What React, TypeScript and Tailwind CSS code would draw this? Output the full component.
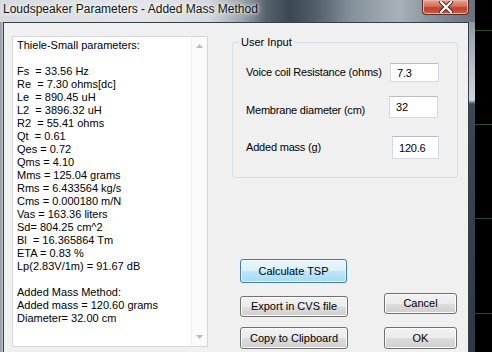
import React from 'react'

const results = [
    'Thiele-Small parameters:',
    '',
    'Fs  = 33.56 Hz',
    'Re  = 7.30 ohms[dc]',
    'Le  = 890.45 uH',
    'L2  = 3896.32 uH',
    'R2  = 55.41 ohms',
    'Qt  = 0.61',
    'Qes = 0.72',
    'Qms = 4.10',
    'Mms = 125.04 grams',
    'Rms = 6.433564 kg/s',
    'Cms = 0.000180 m/N',
    'Vas = 163.36 liters',
    'Sd= 804.25 cm^2',
    'Bl  = 16.365864 Tm',
    'ETA = 0.83 %',
    'Lp(2.83V/1m) = 91.67 dB',
    '',
    'Added Mass Method:',
    'Added mass = 120.60 grams',
    'Diameter= 32.00 cm',
]

function WinButton({ label, className }: { label: string; className: string }) {
    return (
        <div
            className={`flex items-center justify-center rounded-[3px] border border-[#707070] bg-[linear-gradient(to_bottom,#f2f2f2_0%,#ebebeb_50%,#dddddd_51%,#cfcfcf_100%)] text-[11px] text-black shadow-[inset_0_0_0_1px_#fcfcfc] ${className}`}
        >
            {label}
        </div>
    )
}

function Field({ value, className }: { value: string; className: string }) {
    return (
        <div className={`border border-[#d6d9de] border-t-[#b9bcc2] bg-white pl-[6px] text-[11px] leading-[13px] text-black ${className}`}>
            {value}
        </div>
    )
}

export default function App() {
    return (
        <div
            className="flex h-[352px] w-[492px] overflow-hidden bg-black"
            style={{ fontFamily: '"Liberation Sans", Arial, sans-serif' }}
        >
            {/* window */}
            <div className="flex w-[475px] flex-col">
                {/* title bar */}
                <div className="flex h-[22px] items-start justify-between bg-[linear-gradient(to_right,#d6dbdf_0%,#e3e6e8_30%,#d3d8dc_44%,#9aa4ab_51%,#56636d_56%,#3b4853_61%,#4f5c67_66%,#84909a_74%,#a8b1b8_84%,#8a959e_90%,#66727c_100%)]">
                    <span className="pl-[3px] pt-[2px] text-[12px] leading-[14px] text-[#111] [text-shadow:0_0_6px_#ffffff,0_0_3px_#ffffff]">
                        Loudspeaker Parameters - Added Mass Method
                    </span>
                    <div className="mr-[6px] flex h-[15px] w-[47px] items-center justify-center rounded-b-[4px] border border-t-0 border-[#5a2a26] bg-[linear-gradient(to_bottom,#e8a493_0%,#d2705d_45%,#c2412b_55%,#c95a40_100%)] shadow-[inset_0_0_0_1px_#e9b5a8]">
                        <svg width="14" height="12" viewBox="0 0 14 12">
                            <path d="M2 1 L12 11 M12 1 L2 11" stroke="#4a1a14" strokeWidth="4" strokeLinecap="round" />
                            <path d="M2 1 L12 11 M12 1 L2 11" stroke="#ffffff" strokeWidth="2.4" strokeLinecap="round" />
                        </svg>
                    </div>
                </div>

                <div className="flex flex-1">
                    <div className="w-[3px] bg-[linear-gradient(to_right,#8a949c,#c3c9ce)]" />

                    {/* client area */}
                    <div className="flex flex-1 items-start border-x border-t border-[#33404b] bg-[#f0f0f0]">
                        {/* results text box */}
                        <div className="ml-[8px] mt-[13px] flex h-[311px] w-[196px] border border-[#d4d6d9] bg-white">
                            <div className="flex-1 pl-[4px] pt-[2px] text-[11px] leading-[13px] text-black">
                                {results.map((line, i) => (
                                    <div key={i} className="h-[13px] whitespace-pre">
                                        {line}
                                    </div>
                                ))}
                            </div>
                            <div className="flex w-[16px] flex-col items-center justify-between border-l border-[#f0f0f0] bg-[#fafafa] py-[7px]">
                                <svg width="7" height="4" viewBox="0 0 7 4">
                                    <path d="M0 4 L3.5 0 L7 4 Z" fill="#bdbdbd" />
                                </svg>
                                <svg width="7" height="4" viewBox="0 0 7 4">
                                    <path d="M0 0 L7 0 L3.5 4 Z" fill="#bdbdbd" />
                                </svg>
                            </div>
                        </div>

                        {/* right column */}
                        <div className="ml-[24px] mt-[13px] flex flex-col">
                            <fieldset className="h-[142px] w-[226px] rounded-[3px] border border-[#d5dfe5] pl-[13px] pr-[18px]">
                                <legend className="-ml-[7px] px-[2px] text-[11px] leading-[13px] text-black">User Input</legend>
                                <div className="mt-[14px] flex items-center justify-between text-[11px] tracking-[-0.2px] text-black">
                                    <span>Voice coil Resistance (ohms)</span>
                                    <Field value="7.3" className="h-[19px] w-[49px] pt-[3px]" />
                                </div>
                                <div className="mt-[14px] flex items-center justify-between text-[11px] tracking-[-0.2px] text-black">
                                    <span className="pt-[6px]">Membrane diameter (cm)</span>
                                    <Field value="32" className="mr-[1px] h-[22px] w-[49px] pt-[4px]" />
                                </div>
                                <div className="mt-[17px] flex items-center justify-between text-[11px] tracking-[-0.2px] text-black">
                                    <span>Added mass (g)</span>
                                    <Field value="120.6" className="h-[23px] w-[47px] pt-[5px]" />
                                </div>
                            </fieldset>

                            <div className="ml-[8px] mt-[81px] flex h-[24px] w-[107px] items-center justify-center rounded-[3px] border border-[#3c7fb1] bg-[linear-gradient(to_bottom,#eaf6fd_0%,#d9f0fc_50%,#bee6fd_51%,#a7d9f5_100%)] text-[11px] text-black shadow-[inset_0_0_0_1px_#f4fbff]">
                                Calculate TSP
                            </div>

                            <div className="ml-[8px] mt-[10px] flex items-start">
                                <WinButton label="Export in CVS file" className="mt-[3px] h-[21px] w-[108px]" />
                                <WinButton label="Cancel" className="ml-[36px] h-[21px] w-[73px]" />
                            </div>
                            <div className="ml-[8px] mt-[10px] flex items-start">
                                <WinButton label="Copy to Clipboard" className="h-[22px] w-[108px]" />
                                <WinButton label="OK" className="ml-[36px] h-[22px] w-[73px]" />
                            </div>
                        </div>
                    </div>

                    <div className="w-[6px] bg-[linear-gradient(to_bottom,#909ba4_0px,#d2d6da_78px,#3a4754_82px,#2c3946_100%)]" />
                </div>
            </div>

            {/* desktop behind */}
            <div className="flex flex-1 flex-col">
                <div className="mt-[30px] h-px bg-[#2b4a33]" />
                <div className="mt-[93px] h-px bg-[#2b4a33]" />
                <div className="mt-[93px] h-px bg-[#2b4a33]" />
                <div className="mt-[94px] h-px bg-[#2b4a33]" />
            </div>
        </div>
    )
}
